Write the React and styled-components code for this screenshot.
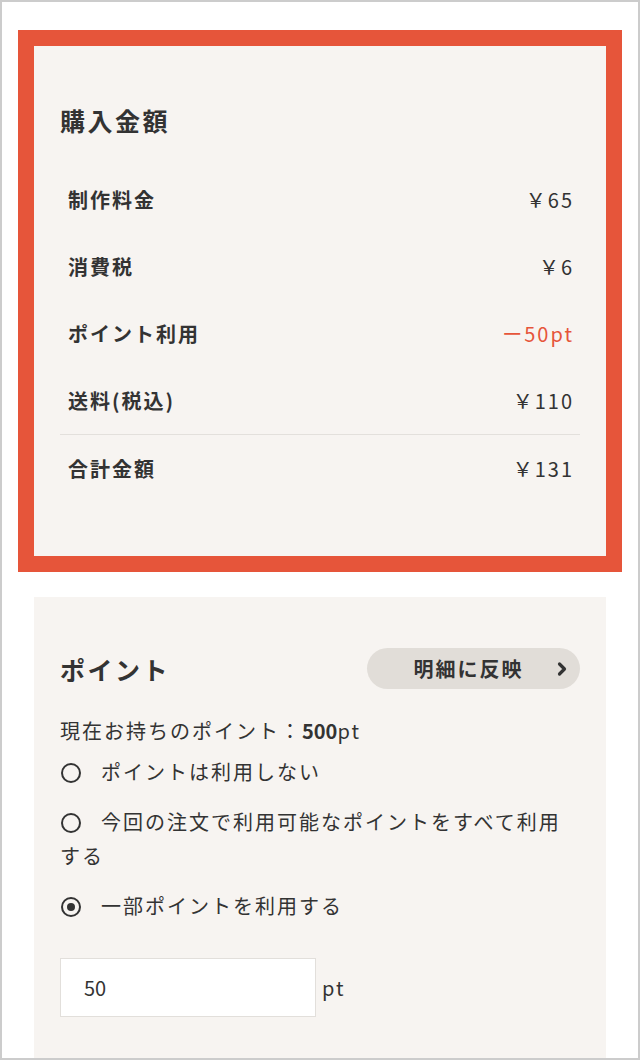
import React from "react";
import styled, { createGlobalStyle } from "styled-components";

const Global = createGlobalStyle`
  html, body { margin: 0; padding: 0; background: #fff; }
  body {
    font-family: "Noto Sans CJK JP", "Noto Sans", sans-serif;
    color: #333;
  }
  * { box-sizing: border-box; }
`;

const Page = styled.div`
  width: 640px;
  height: 1060px;
  border: 2px solid #cccccc;
  overflow: hidden;
  padding: 28px 16px 0;
  background: #fff;
`;

const Highlight = styled.div`
  border: 16px solid #e6553a;
`;

const Panel = styled.section`
  background: #f7f4f1;
  padding: ${(p) => p.$pad};
  margin: ${(p) => p.$margin || "0"};
`;

const Heading = styled.h2`
  margin: 0;
  font-size: 25px;
  line-height: 36px;
  font-weight: 700;
  letter-spacing: 0.1em;
  color: #333;
`;

const Rows = styled.div`
  margin-top: 28px;
  display: flex;
  flex-direction: column;
`;

const Row = styled.div`
  display: flex;
  align-items: center;
  justify-content: space-between;
  height: 67px;
  padding: 0 8px;
  border-top: ${(p) => (p.$divider ? "1px solid #e3e0dc" : "none")};
  font-size: 20px;
  letter-spacing: 0.1em;
`;

const Label = styled.span`
  font-weight: 700;
`;

const Value = styled.span`
  font-weight: 400;
  color: ${(p) => (p.$accent ? "#e6553a" : "#333")};
  margin-right: -2px;
`;

const HeaderRow = styled.div`
  display: flex;
  align-items: center;
  justify-content: space-between;
  height: 41px;
`;

const ReflectButton = styled.button`
  position: relative;
  width: 213px;
  height: 41px;
  border: none;
  border-radius: 21px;
  background: #e1ddd8;
  color: #333;
  font-family: inherit;
  font-size: 20px;
  font-weight: 700;
  letter-spacing: 0.1em;
  padding: 0 10px 0 0;
  text-align: center;
  cursor: pointer;
`;

const Chevron = styled.svg`
  position: absolute;
  right: 12px;
  top: 50%;
  transform: translateY(-50%);
`;

const Body = styled.div`
  margin-top: 25px;
  font-size: 20px;
  line-height: 34px;
  letter-spacing: 0.1em;
`;

const Current = styled.p`
  margin: 0 0 7px;
  b { font-weight: 700; letter-spacing: 0; }
`;

const Options = styled.div`
  display: flex;
  flex-direction: column;
  gap: 16px;
`;

const Option = styled.label`
  display: block;
  cursor: pointer;
`;

const Radio = styled.span`
  display: inline-block;
  vertical-align: -3px;
  position: relative;
  width: 20px;
  height: 20px;
  margin: 0 20px 0 1px;
  border: 2px solid #333;
  border-radius: 50%;
  &::after {
    content: "";
    display: ${(p) => (p.$checked ? "block" : "none")};
    position: absolute;
    left: 50%;
    top: 50%;
    width: 8px;
    height: 8px;
    margin: -4px 0 0 -4px;
    border-radius: 50%;
    background: #333;
  }
`;

const InputRow = styled.div`
  display: flex;
  align-items: center;
  gap: 6px;
  margin-top: 35px;
`;

const PointInput = styled.input`
  width: 256px;
  height: 59px;
  border: 1px solid #e2dfdb;
  background: #fff;
  padding: 0 0 0 23px;
  font-family: inherit;
  font-size: 20px;
  color: #333;
  outline: none;
`;

const Unit = styled.span`
  font-size: 20px;
  color: #333;
`;

const rows = [
  { label: "制作料金", value: "￥65" },
  { label: "消費税", value: "￥6" },
  { label: "ポイント利用", value: "ー50pt", accent: true },
  { label: "送料(税込)", value: "￥110" },
  { label: "合計金額", value: "￥131", divider: true },
];

const options = [
  { text: "ポイントは利用しない" },
  { text: "今回の注文で利用可能なポイントをすべて利用する" },
  { text: "一部ポイントを利用する", checked: true },
];

export default function App() {
  return (
    <>
      <Global />
      <Page>
        <Highlight>
          <Panel $pad="56px 26px 55px">
            <Heading>購入金額</Heading>
            <Rows>
              {rows.map((r) => (
                <Row key={r.label} $divider={r.divider}>
                  <Label>{r.label}</Label>
                  <Value $accent={r.accent}>{r.value}</Value>
                </Row>
              ))}
            </Rows>
          </Panel>
        </Highlight>
        <Panel $pad="51px 26px 60px" $margin="25px 16px 0">
          <HeaderRow>
            <Heading>ポイント</Heading>
            <ReflectButton type="button">
              明細に反映
              <Chevron width="12" height="16" viewBox="0 0 12 16">
                <path d="M3.5 3 L8.5 8 L3.5 13" fill="none" stroke="#333" strokeWidth="3.2" strokeLinecap="round" strokeLinejoin="round" />
              </Chevron>
            </ReflectButton>
          </HeaderRow>
          <Body>
            <Current>
              現在お持ちのポイント：<b>500</b>pt
            </Current>
            <Options>
              {options.map((o) => (
                <Option key={o.text}>
                  <Radio $checked={o.checked} />
                  {o.text}
                </Option>
              ))}
            </Options>
            <InputRow>
              <PointInput defaultValue="50" />
              <Unit>pt</Unit>
            </InputRow>
          </Body>
        </Panel>
      </Page>
    </>
  );
}
